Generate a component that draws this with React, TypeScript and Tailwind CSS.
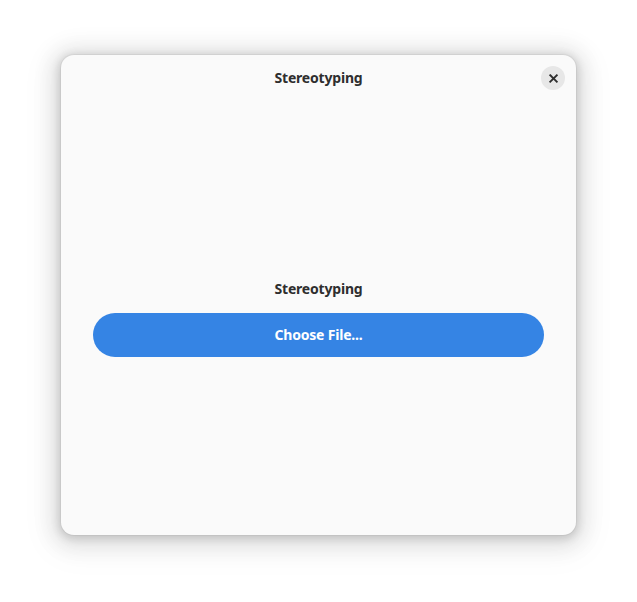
import { X } from "lucide-react";

const font = { fontFamily: '"Noto Sans", "Open Sans", sans-serif' };

export default function App() {
  return (
    <div className="min-h-[602px] w-full bg-white pt-[55px] pl-[61px]" style={font}>
      {/* Dialog window */}
      <div className="flex h-[480px] w-[515px] flex-col rounded-[13px] bg-[#fafafa] text-[#2e2e2e] shadow-[0_0_0_1px_rgba(0,0,0,0.04),0_2px_8px_2px_rgba(0,0,0,0.14),0_3px_20px_10px_rgba(0,0,0,0.09),0_6px_32px_16px_rgba(0,0,0,0.03)]">
        {/* Header bar */}
        <div className="relative flex h-[46px] shrink-0 items-center justify-center">
          <span className="text-[14px] font-bold leading-5 tracking-[-0.2px]">Stereotyping</span>
          <button className="absolute right-[11px] top-[11px] flex h-6 w-6 items-center justify-center rounded-full bg-[#e7e7e7]">
            <X size={13} strokeWidth={3.5} strokeLinecap="square" className="text-[#2e2e2e]" />
          </button>
        </div>

        {/* Content */}
        <div className="flex flex-1 flex-col items-center justify-center px-8">
          <span className="text-[14px] font-bold leading-5 tracking-[-0.2px]">Stereotyping</span>
          <button className="mt-[14px] flex h-11 w-full items-center justify-center rounded-full bg-[#3584e4] pb-[1px] text-[14px] font-bold tracking-[-0.2px] text-white">
            Choose File...
          </button>
        </div>
      </div>
    </div>
  );
}
